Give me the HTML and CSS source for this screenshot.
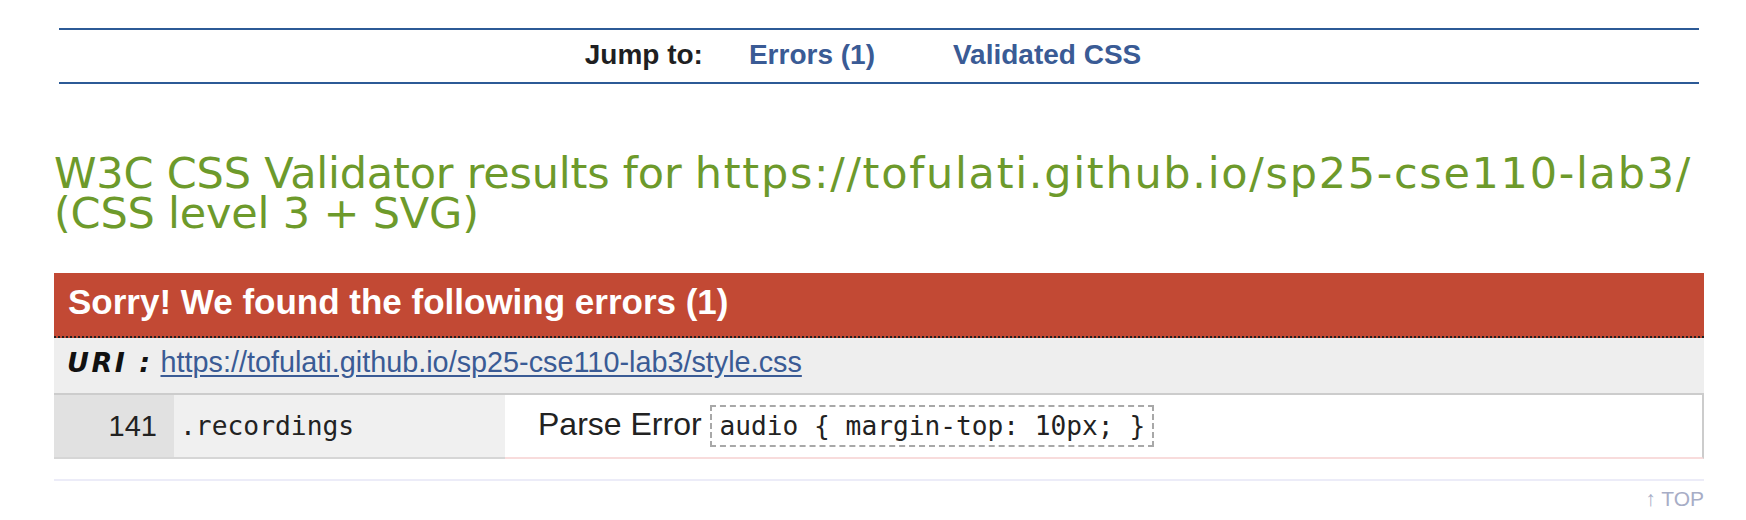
FILE: index.html
```html
<!DOCTYPE html>
<html lang="en">
<head>
<meta charset="utf-8">
<title>W3C CSS Validator results</title>
<link rel="stylesheet" href="styles.css">
</head>
<body>
<div class="page">
  <nav class="jump">
    <span class="jump-label">Jump to:</span>
    <a href="#errors" class="jump-link">Errors (1)</a>
    <a href="#css" class="jump-link">Validated CSS</a>
  </nav>

  <h2 class="title">W3C CSS Validator results for <span class="title-url">https://tofulati.github.io/sp25-cse110-lab3/</span> (CSS level 3 + SVG)</h2>

  <div class="errors" id="errors">
    <h3 class="errors-head">Sorry! We found the following errors (1)</h3>
    <div class="uri"><span class="uri-label">URI :</span> <a class="uri-link" href="#">https://tofulati.github.io/sp25-cse110-lab3/style.css</a></div>
    <table class="err-table">
      <tr>
        <td class="linenum">141</td>
        <td class="ctx">.recordings</td>
        <td class="msg">Parse Error <span class="code">audio { margin-top: 10px; }</span></td>
      </tr>
    </table>
  </div>

  <div class="toprow"><a class="top" href="#">&#8593; TOP</a></div>
</div>
</body>
</html>
```

FILE: styles.css
```css
html, body {
  margin: 0;
  padding: 0;
  background: #ffffff;
}

body {
  font-family: "Liberation Sans", Arial, Helvetica, sans-serif;
  color: #222222;
}

.page {
  padding: 0 42px 0 54px;
}

.jump {
  margin: 28px 5px 0;
  border-top: 2px solid #2c5a96;
  border-bottom: 2px solid #2c5a96;
  display: flex;
  justify-content: center;
  align-items: baseline;
  gap: 14px;
  font-size: 28px;
  line-height: 46px;
  padding: 2px 0 4px;
  font-weight: bold;
}

.jump-label {
  color: #1f1f22;
}

.jump-link {
  color: #3a5b95;
  text-decoration: none;
  padding: 0 32px;
}

.title {
  margin: 69px 0 40px;
  font-family: "DejaVu Sans", Verdana, sans-serif;
  font-weight: normal;
  font-size: 43px;
  letter-spacing: -0.2px;
  line-height: 40px;
  color: #6d9a2b;
}

.title-url {
  letter-spacing: 1.7px;
}

.errors-head {
  margin: 0;
  background: #c24934;
  color: #ffffff;
  font-size: 35px;
  font-weight: bold;
  line-height: 57px;
  padding: 0 15px 6px 14px;
  border-bottom: 2px dotted #222222;
}

.uri {
  background: #eeeeee;
  line-height: 49px;
  padding: 0 0 6px 13px;
  font-size: 28.8px;
}

.uri-label {
  font-family: "DejaVu Sans", Verdana, sans-serif;
  font-weight: bold;
  font-style: italic;
  font-size: 27px;
  letter-spacing: 2.5px;
  color: #111111;
}

.uri-link {
  color: #3a5b95;
  text-decoration: underline;
  text-underline-offset: 3px;
}

.err-table {
  width: 100%;
  border-collapse: separate;
  border-spacing: 0;
  border-top: 2px solid #cccccc;
  font-size: 29px;
}

.err-table td {
  height: 62px;
  padding: 0;
  vertical-align: middle;
}

.linenum {
  width: 103px;
  padding-right: 17px !important;
  background: #e1e1e1;
  text-align: right;
  border-bottom: 2px solid #d6d6d6;
}

.ctx {
  width: 325px;
  padding-left: 6px !important;
  background: #f0f0f0;
  font-family: "DejaVu Sans Mono", "Liberation Mono", monospace;
  font-size: 26.3px;
  border-bottom: 2px solid #d6d6d6;
}

.msg {
  padding-left: 33px !important;
  background: #ffffff;
  font-size: 32px;
  border-right: 2px solid #cccccc;
  border-bottom: 2px solid #f8dcdc;
}

.code {
  display: inline-block;
  border: 2px dashed #a8a8a8;
  padding: 0 7px;
  font-family: "DejaVu Sans Mono", "Liberation Mono", monospace;
  font-size: 26.2px;
  line-height: 38px;
}

.toprow {
  margin-top: 20px;
  border-top: 2px solid #ececf8;
  text-align: right;
  padding-top: 3px;
  font-size: 21px;
  line-height: 30px;
}

.top {
  color: #a7adc6;
  text-decoration: none;
}
```
